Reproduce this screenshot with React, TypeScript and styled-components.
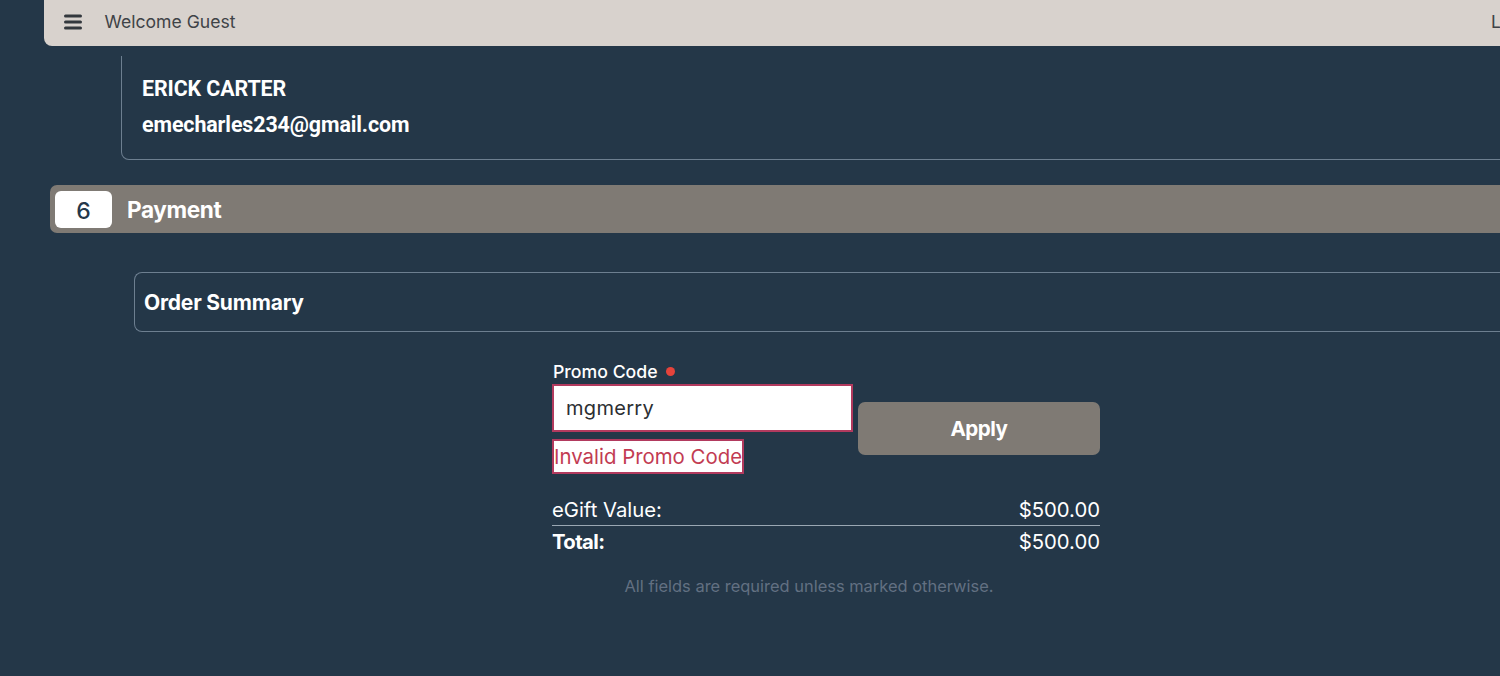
import React from 'react';
import styled, { createGlobalStyle } from 'styled-components';

const GlobalStyle = createGlobalStyle`
  html, body {
    margin: 0;
    padding: 0;
    background: #243748;
    overflow: hidden;
  }
  body {
    font-family: Inter, "Liberation Sans", sans-serif;
    color: #fff;
  }
`;

const Page = styled.div`
  width: 1500px;
  height: 676px;
  overflow: hidden;
  background: #243748;
`;

const TopBar = styled.header`
  display: flex;
  align-items: center;
  width: 1500px;
  height: 46px;
  margin-left: 44px;
  padding: 0 7px 2px 20px;
  box-sizing: border-box;
  background: #d8d2cd;
  border-bottom-left-radius: 8px;
  color: #3f4347;
`;

const MenuIcon = styled.svg`
  width: 18px;
  height: 16px;
  display: block;
  margin-right: 22.5px;
`;

const Welcome = styled.span`
  margin-top: -2px;
  font-size: 17.6px;
`;

const Login = styled.span`
  margin: -2px 0 0 auto;
  font-size: 17.6px;
`;

const ContactCard = styled.section`
  width: 1500px;
  height: 104px;
  margin: 10px 0 0 121px;
  padding: 21px 0 0 20px;
  box-sizing: border-box;
  border: 1px solid #6d7f90;
  border-top: 0;
  border-radius: 0 0 0 8px;
`;

const ContactLine = styled.div`
  font-family: Roboto, Inter, sans-serif;
  font-size: 21.4px;
  font-weight: 700;
  line-height: 24px;
  margin-bottom: 12px;
  letter-spacing: -0.1px;
`;

const SectionBar = styled.div`
  display: flex;
  align-items: center;
  gap: 15px;
  width: 1500px;
  height: 48px;
  margin: 25px 0 0 50px;
  padding-left: 5px;
  box-sizing: border-box;
  background: #7f7a74;
  border-radius: 7px;
`;

const StepBadge = styled.div`
  display: flex;
  align-items: center;
  justify-content: center;
  width: 57px;
  height: 37px;
  padding-top: 3px;
  box-sizing: border-box;
  background: #fff;
  border-radius: 6px;
  color: #24374a;
  font-size: 23px;
  font-weight: 500;
`;

const SectionTitle = styled.h2`
  margin: 1px 0 0;
  font-size: 22.6px;
  font-weight: 700;
  letter-spacing: -0.4px;
`;

const SummaryHeader = styled.div`
  display: flex;
  align-items: center;
  width: 1500px;
  height: 60px;
  margin: 39px 0 0 134px;
  padding: 1px 0 0 9px;
  box-sizing: border-box;
  border: 1px solid #6d7f90;
  border-right: 0;
  border-radius: 8px 0 0 8px;
  font-size: 21px;
  font-weight: 700;
  letter-spacing: -0.2px;
`;

const FormColumn = styled.div`
  width: 548px;
  margin: 28px 0 0 552px;
`;

const PromoRow = styled.div`
  display: flex;
  align-items: flex-start;
  gap: 5px;
`;

const PromoField = styled.div`
  display: flex;
  flex-direction: column;
  align-items: flex-start;
  width: 301px;
`;

const PromoLabel = styled.label`
  display: flex;
  align-items: center;
  gap: 8px;
  height: 24px;
  padding: 0 0 2px 1px;
  box-sizing: border-box;
  font-size: 17.7px;
  font-weight: 500;
`;

const RequiredDot = styled.span`
  width: 9px;
  height: 9px;
  border-radius: 50%;
  background: #e5433b;
`;

const PromoInput = styled.input`
  width: 301px;
  height: 48px;
  box-sizing: border-box;
  padding: 0 12px;
  border: 2px solid #b23a5e;
  background: #fff;
  outline: 0;
  font-family: inherit;
  font-size: 20px;
  letter-spacing: 0.3px;
  color: #2c2f33;
`;

const PromoError = styled.div`
  display: flex;
  align-items: center;
  height: 35px;
  margin-top: 7px;
  padding: 0;
  box-sizing: border-box;
  border: 2px solid #b23a5e;
  background: #fff;
  color: #c23b52;
  font-size: 20.4px;
  white-space: nowrap;
`;

const ApplyButton = styled.button`
  width: 243px;
  height: 53px;
  margin-top: 42px;
  border: 0;
  border-radius: 7px;
  background: #7f7a74;
  color: #fff;
  font-family: inherit;
  font-size: 20.6px;
  font-weight: 700;
  letter-spacing: -0.5px;
`;

const TotalRows = styled.div`
  margin-top: 20px;
`;

const TotalRow = styled.div<{ $divided?: boolean }>`
  display: flex;
  align-items: center;
  justify-content: space-between;
  height: ${({ $divided }) => ($divided ? '32px' : '30px')};
  font-size: 20.3px;
  box-sizing: border-box;
  border-bottom: ${({ $divided }) => ($divided ? '1px solid #9aa7b3' : '0')};
`;

const BoldLabel = styled.span`
  font-weight: 700;
  letter-spacing: -0.6px;
`;

const FootNote = styled.p`
  width: 514px;
  margin: 20px 0 0;
  text-align: center;
  font-size: 16.45px;
  color: #627082;
`;

const App: React.FC = () => {
  return (
    <Page>
      <GlobalStyle />
      <TopBar>
        <MenuIcon viewBox="0 0 18 16" aria-hidden="true">
          <rect x="0" y="0.5" width="18" height="3" rx="1.5" fill="#33383d" />
          <rect x="0" y="6.5" width="18" height="3" rx="1.5" fill="#33383d" />
          <rect x="0" y="12.5" width="18" height="3" rx="1.5" fill="#33383d" />
        </MenuIcon>
        <Welcome>Welcome Guest</Welcome>
        <Login>Login</Login>
      </TopBar>

      <ContactCard>
        <ContactLine>ERICK CARTER</ContactLine>
        <ContactLine>emecharles234@gmail.com</ContactLine>
      </ContactCard>

      <SectionBar>
        <StepBadge>6</StepBadge>
        <SectionTitle>Payment</SectionTitle>
      </SectionBar>

      <SummaryHeader>Order Summary</SummaryHeader>

      <FormColumn>
        <PromoRow>
          <PromoField>
            <PromoLabel>
              Promo Code <RequiredDot />
            </PromoLabel>
            <PromoInput defaultValue="mgmerry" />
            <PromoError>Invalid Promo Code</PromoError>
          </PromoField>
          <ApplyButton>Apply</ApplyButton>
        </PromoRow>

        <TotalRows>
          <TotalRow $divided>
            <span>eGift Value:</span>
            <span>$500.00</span>
          </TotalRow>
          <TotalRow>
            <BoldLabel>Total:</BoldLabel>
            <span>$500.00</span>
          </TotalRow>
        </TotalRows>

        <FootNote>All fields are required unless marked otherwise.</FootNote>
      </FormColumn>
    </Page>
  );
};

export default App;
